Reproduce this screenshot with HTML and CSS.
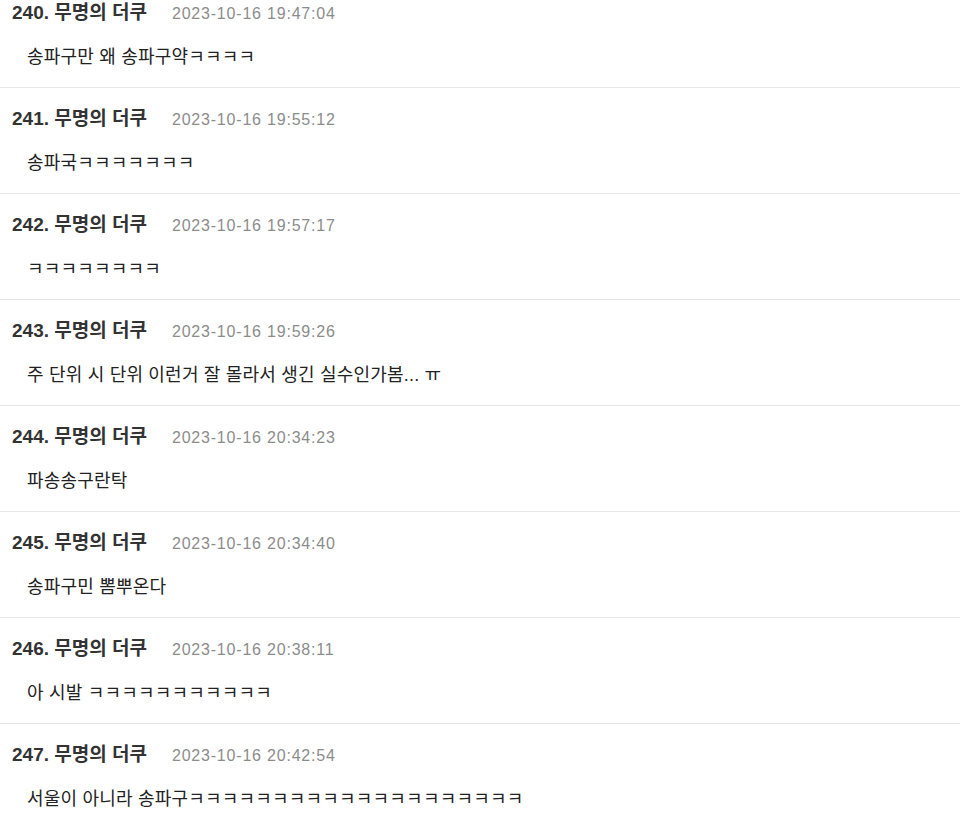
FILE: index.html
```html
<!DOCTYPE html>
<html lang="ko">
<head>
    <meta charset="UTF-8">
    <meta name="viewport" content="width=device-width, initial-scale=1.0">
    <title>댓글</title>
    <link rel="stylesheet" href="styles.css">
</head>
<body>
    <div class="comments">
        <div class="comment">
            <div class="comment-head"><span class="name">240. 무명의 더쿠</span><span class="date">2023-10-16 19:47:04</span></div>
            <div class="comment-body">송파구만 왜 송파구약ㅋㅋㅋㅋ</div>
        </div>
        <div class="comment">
            <div class="comment-head"><span class="name">241. 무명의 더쿠</span><span class="date">2023-10-16 19:55:12</span></div>
            <div class="comment-body">송파국ㅋㅋㅋㅋㅋㅋㅋ</div>
        </div>
        <div class="comment">
            <div class="comment-head"><span class="name">242. 무명의 더쿠</span><span class="date">2023-10-16 19:57:17</span></div>
            <div class="comment-body">ㅋㅋㅋㅋㅋㅋㅋㅋ</div>
        </div>
        <div class="comment">
            <div class="comment-head"><span class="name">243. 무명의 더쿠</span><span class="date">2023-10-16 19:59:26</span></div>
            <div class="comment-body">주 단위 시 단위 이런거 잘 몰라서 생긴 실수인가봄... ㅠ</div>
        </div>
        <div class="comment">
            <div class="comment-head"><span class="name">244. 무명의 더쿠</span><span class="date">2023-10-16 20:34:23</span></div>
            <div class="comment-body">파송송구란탁</div>
        </div>
        <div class="comment">
            <div class="comment-head"><span class="name">245. 무명의 더쿠</span><span class="date">2023-10-16 20:34:40</span></div>
            <div class="comment-body">송파구민 뽐뿌온다</div>
        </div>
        <div class="comment">
            <div class="comment-head"><span class="name">246. 무명의 더쿠</span><span class="date">2023-10-16 20:38:11</span></div>
            <div class="comment-body">아 시발 ㅋㅋㅋㅋㅋㅋㅋㅋㅋㅋㅋ</div>
        </div>
        <div class="comment">
            <div class="comment-head"><span class="name">247. 무명의 더쿠</span><span class="date">2023-10-16 20:42:54</span></div>
            <div class="comment-body">서울이 아니라 송파구ㅋㅋㅋㅋㅋㅋㅋㅋㅋㅋㅋㅋㅋㅋㅋㅋㅋㅋㅋㅋ</div>
        </div>
    </div>
</body>
</html>
```

FILE: styles.css
```css
body {
    margin: 0;
    background: #fff;
    font-family: "Liberation Sans", "Noto Sans CJK KR", sans-serif;
    overflow: hidden;
}
.comments {
    margin-top: -19px;
}
.comment {
    border-top: 1px solid #e6e6e6;
    padding: 20px 0 18px 12px;
}
.comment-head {
    display: flex;
    align-items: baseline;
    gap: 25px;
    height: 22px;
    line-height: 22px;
}
.name {
    font-size: 19px;
    font-weight: bold;
    color: #333;
}
.date {
    font-size: 16px;
    letter-spacing: 0.8px;
    color: #8c8c8c;
}
.comment-body {
    margin-top: 21px;
    padding-left: 15px;
    font-size: 18px;
    letter-spacing: 0.2px;
    line-height: 24px;
    color: #222;
}
```
